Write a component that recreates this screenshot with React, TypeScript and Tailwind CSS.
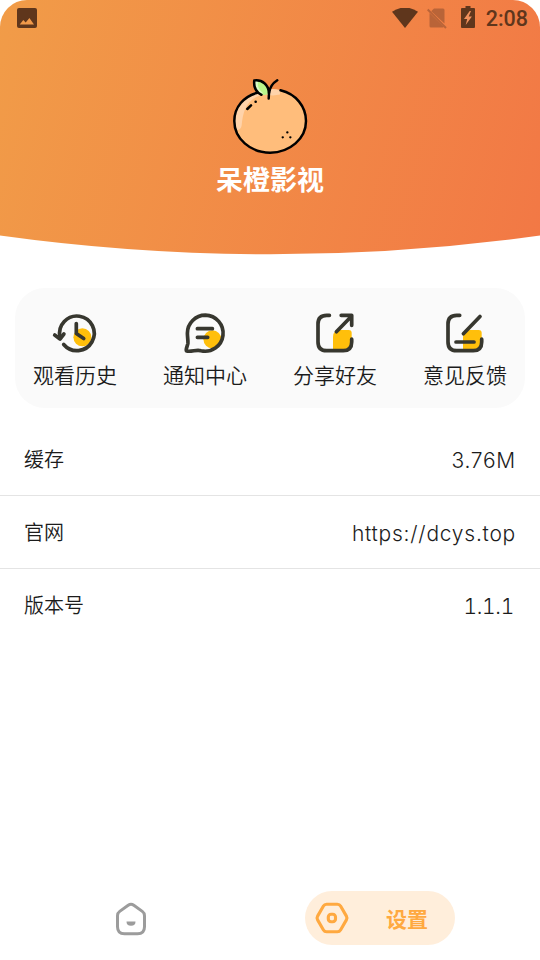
import { clsx } from 'clsx';
import type { ReactNode } from 'react';

interface ActionProps {
  label: string;
  children: ReactNode;
}

interface SettingRowProps {
  label: string;
  value: string;
  valueClassName?: string;
}

function StatusBar() {
  return (
    <div className="flex h-9 items-center pr-3 pl-[17px] text-[#5f361c]">
      <svg className="size-5" viewBox="0 0 20 20">
        <rect width="20" height="20" rx="2" fill="currentColor" />
        <path d="M2.700 16.500l3.600-4.600 2.400 2.600L12.400 10 17 16.500z" fill="#f19a4a" />
      </svg>
      <svg className="ml-auto h-[21px] w-[26px]" viewBox="0 0 26 21">
        <path d="M0 3.800Q13-4.800 26 3.800L13 20z" fill="currentColor" />
      </svg>
      <svg className="ml-[9px] h-[22px] w-5" viewBox="0 0 20 22" fill="#b96438">
        <path d="M7 1.500H16a1.500 1.500 0 0 1 1.500 1.500V16.500L4.200 4.300z" />
        <path d="M2.500 6L16.800 20a1.500 1.500 0 0 1-1 .5H4A1.500 1.500 0 0 1 2.500 19z" />
        <path d="M.7 2.500L19 21" stroke="#b96438" strokeWidth="1.900" />
      </svg>
      <svg className="mb-0.5 ml-[14px] h-[22px] w-[14px]" viewBox="0 0 14 22">
        <path d="M4.500 0h5v2H13a1 1 0 0 1 1 1v18a1 1 0 0 1-1 1H1a1 1 0 0 1-1-1V3a1 1 0 0 1 1-1h3.500z" fill="currentColor" />
        <path d="M8.700 5L3 13h3.200L4.700 19l6.200-8.500H7.700L10 5z" fill="#f0905c" />
      </svg>
      <span className="mt-0.5 ml-[11px] font-['Roboto',sans-serif] text-[21.500px] leading-none font-medium">2:08</span>
    </div>
  );
}

function OrangeLogo() {
  return (
    <svg className="size-20" viewBox="0 0 80 80" fill="none" strokeLinecap="round">
      <ellipse cx="40.100" cy="45" rx="36" ry="31.800" fill="#ffbd7b" />
      <path d="M30 14.800C14 18 4.200 30 4.200 44c0 4 .8 7 2 10 3 0 5-1 5.500-5C13 36 16 24 30 19.500z" fill="#ffd3aa" />
      <path d="M37 13.300c5-.5 9-.3 13 .8v4.500c-4 1-8 1-13 .4z" fill="#ffd3aa" />
      <path d="M50.500 14.300C66 18 76 30.500 76 45c0 17.500-16 31.700-35.900 31.700S4.300 62.500 4.300 45c0-14 9.500-24.500 23-28.300" stroke="#000" strokeWidth="2.500" />
      <path d="M24.300 4.500c8-1.500 14 4.500 14.700 13-4 1.800-6.500 2-8.500 1C26 15.500 24 10 24.300 4.500z" fill="#b9f58c" />
      <path d="M24.300 4.500C24 11 26 16 31 18.700L33 17C28 13 27 9 28.500 4.500z" fill="#dcfbc5" />
      <path d="M31.500 18.800C26 16 23.500 11 24.300 4.500c8-1 14.200 4 14.700 12.500" stroke="#000" strokeWidth="2.500" />
      <path d="M47.300 4.300c-4 2.500-7.500 7-8.300 12.700l-.3 5.500" stroke="#000" strokeWidth="2.500" />
      <path d="M17.300 33l3.700-3.600M25.600 25.700h.1" stroke="#000" strokeWidth="2.500" />
      <path d="M57.300 56.400h.1M52.700 61.300h.1M60.300 61.300h.1" stroke="#000" strokeWidth="2.300" />
    </svg>
  );
}

function Action({ label, children }: ActionProps) {
  return (
    <div className="flex w-[84px] flex-col items-center">
      <svg
        className="size-12"
        viewBox="0.3 0 48 48"
        fill="none"
        stroke="#37372f"
        strokeWidth="3.700"
        strokeLinecap="round"
        strokeLinejoin="round"
      >
        {children}
      </svg>
      <p className="mt-px text-[21px] leading-8 font-[350] whitespace-nowrap">{label}</p>
    </div>
  );
}

function SettingRow({ label, value, valueClassName = 'tracking-[0.75px]' }: SettingRowProps) {
  return (
    <div className="flex h-[73px] items-center justify-between border-b border-[#e4e4e4] pr-6 pl-6 last:border-transparent">
      <span className="text-xl font-[350]">{label}</span>
      <span className={clsx("mt-[3px] font-['Inter',sans-serif] text-[21px] font-[330]", valueClassName)}>{value}</span>
    </div>
  );
}

export default function App() {
  return (
    <div className="flex h-[960px] w-[540px] flex-col overflow-hidden bg-white font-['Noto_Sans_CJK_SC',sans-serif] text-[#1c1c1c]">
      <header className="h-[255px] rounded-t-[27px] bg-linear-[105deg,#f19c48,#f27845] [clip-path:path('M0_0H540V235.5Q270_273_0_235.5Z')]">
        <StatusBar />
        <div className="flex flex-col items-center pt-10">
          <OrangeLogo />
          <h1 className="mt-[3px] text-[27px] leading-10 font-bold text-white">呆橙影视</h1>
        </div>
      </header>

      <section className="mx-[15px] mt-[33px] flex h-[120px] justify-between rounded-[30px] bg-[#fafafa] px-[18px] pt-[21px]">
        <Action label="观看历史">
          <circle cx="31.700" cy="28.300" r="9" fill="#ffbf0b" stroke="none" />
          <path d="M13 35.500A17.300 17.300 0 1 0 9.300 28" />
          <path d="M4 26l5.300 4L13.200 25M25.600 14.500v10l7.400 5" />
        </Action>
        <Action label="通知中心">
          <circle cx="31.700" cy="30.300" r="9" fill="#ffbf0b" stroke="none" />
          <path d="M24.700 6.200a18 18 0 1 1-4.500 35.500C16 40.300 12 42.700 7 42.200 4 42 6.500 38 7.200 34.500 7.500 32 6.700 28 6.700 24.200a18 18 0 0 1 18-18z" />
          <path d="M16.700 19.700h15M16.700 28.300H27" />
        </Action>
        <Action label="分享好友">
          <path d="M22.300 41.700V28q0-7 7-7H38q3 0 3 3v11q0 6.700-7 6.700z" fill="#ffbf0b" stroke="none" />
          <path d="M18.700 6.300H16q-8.700 0-8.700 8.700v18q0 8.700 8.700 8.700h16.500q8.500 0 8.500-8.700v-2.800" />
          <path d="M25.700 22.700L41 7M30.500 6.300H41v10" />
        </Action>
        <Action label="意见反馈">
          <path d="M22.300 41.700V28q0-7 7-7H38q3 0 3 3v11q0 6.700-7 6.700z" fill="#ffbf0b" stroke="none" />
          <path d="M19 6.300h-3q-8.700 0-8.700 8.700v18q0 8.700 8.700 8.700h16.500q8.500 0 8.500-8.700v-2.800" />
          <path d="M22.700 24.700L39.300 7.500M15.300 33h18" />
        </Action>
      </section>

      <section className="mt-[15px]">
        <SettingRow label="缓存" value="3.76M" />
        <SettingRow label="官网" value="https://dcys.top" />
        <SettingRow label="版本号" value="1.1.1" valueClassName="pr-0.5 tracking-[-0.3px] tabular-nums" />
      </section>

      <nav className="mt-auto mb-[15px] flex h-[54px] items-center pl-[115px]">
        <svg className="mt-0.5 h-9 w-8" viewBox="0 0 32 36" fill="none" stroke="#9c9c9c" strokeWidth="3">
          <path d="M13.200 4.200q2.800-2 5.600 0l8.500 6.200q2.200 1.600 2.200 4.300V25.700q0 7-7 7h-13q-7 0-7-7V14.700q0-2.700 2.200-4.300z" />
          <path d="M11.500 20.500h9q0 4.300-4.500 4.300t-4.500-4.300z" fill="#9c9c9c" stroke="none" />
        </svg>
        <div className="ml-[158px] flex h-[54px] w-[150px] items-center rounded-full bg-[#ffeedb] pl-[9px] text-[#ffa940]">
          <svg className="size-9" viewBox="-0.5 -0.5 37 37" fill="none" stroke="currentColor" strokeWidth="3.200" strokeLinejoin="round">
            <path d="M12.500 3.800h11q2.200 0 3.300 1.900l6 10.400q1.100 1.900 0 3.800l-6 10.400q-1.100 1.900-3.300 1.900h-11q-2.200 0-3.300-1.900l-6-10.400q-1.100-1.900 0-3.800l6-10.400q1.100-1.900 3.300-1.900z" />
            <rect x="14.200" y="14.200" width="7.400" height="7.600" rx="2.800" />
          </svg>
          <span className="ml-9 text-[21px] leading-none font-bold">设置</span>
        </div>
      </nav>
    </div>
  );
}
